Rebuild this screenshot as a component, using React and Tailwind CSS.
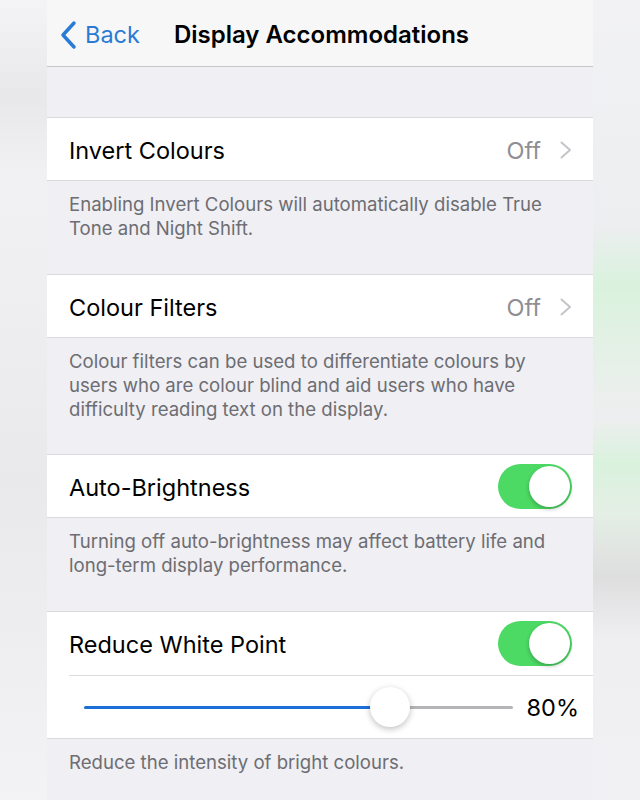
const font = { fontFamily: 'Inter, "Noto Sans", sans-serif' };

const Toggle = () => (
  <div className="relative w-[74px] h-[45px] rounded-full bg-[#4cd964]">
    <div className="absolute right-[2px] top-[2px] w-[41px] h-[41px] rounded-full bg-white shadow-[0_2px_4px_rgba(0,0,0,0.25)]" />
  </div>
);

const Footer = ({ children, className = '' }) => (
  <div className={`px-[22px] pt-[11px] text-[18.6px] leading-[24px] text-[#6d6d72] ${className}`}>
    {children}
  </div>
);

const LinkRow = ({ label, value }) => (
  <div className="h-[64px] bg-white border-y border-[#d9d9de] flex items-center pl-[22px] pr-[20px]">
    <span className="pt-[3px] text-[23.5px] text-black flex-1">{label}</span>
    <span className="pt-[3px] text-[23.5px] text-[#8e8e93]">{value}</span>
    <svg className="ml-[18px] mt-[2px]" width="14" height="18" viewBox="0 0 14 18" fill="none">
      <path d="M2.5 1.5 L11 9 L2.5 16.5" stroke="#c4c4c9" strokeWidth="2" strokeLinecap="round" strokeLinejoin="round" />
    </svg>
  </div>
);

const ToggleRow = ({ label }) => (
  <div className="h-[64px] bg-white border-y border-[#d9d9de] flex items-center pl-[22px] pr-[21px]">
    <span className="pt-[3px] text-[23.5px] text-black flex-1">{label}</span>
    <Toggle />
  </div>
);

export default function App() {
  return (
    <div className="w-[640px] h-[800px] overflow-hidden flex bg-[#f0f0f3]" style={font}>
      <div className="w-[47px] bg-[linear-gradient(180deg,#f4f4f6_0%,#e8e8eb_12%,#f1f1f3_22%,#eeeef0_40%,#e9e9ec_60%,#f3f3f5_100%)]" />

      <div className="w-[546px] bg-[#efeff4] flex flex-col">
        <div className="h-[67px] bg-[#f7f7f8] border-b border-[#c6c6cb] flex items-center pt-[3px]">
          <div className="flex items-center pl-[12px] text-[#2a7bd6]">
            <svg width="20" height="30" viewBox="0 0 20 30" fill="none">
              <path d="M15 3 L4 15 L15 27" stroke="currentColor" strokeWidth="3.5" strokeLinecap="round" strokeLinejoin="round" />
            </svg>
            <span className="ml-[6px] text-[23.5px]">Back</span>
          </div>
          <span className="ml-[34px] text-[24px] font-semibold text-black">Display Accommodations</span>
        </div>

        <div className="h-[50px]" />

        <LinkRow label="Invert Colours" value="Off" />
        <Footer className="h-[93px]">
          Enabling Invert Colours will automatically disable True Tone and Night Shift.
        </Footer>

        <LinkRow label="Colour Filters" value="Off" />
        <Footer className="h-[116px]">
          Colour filters can be used to differentiate colours by users who are colour blind and aid users who have difficulty reading text on the display.
        </Footer>

        <ToggleRow label="Auto-Brightness" />
        <Footer className="h-[93px]">
          Turning off auto-brightness may affect battery life and long-term display performance.
        </Footer>

        <div className="bg-white border-y border-[#d9d9de]">
          <div className="h-[63px] flex items-center pl-[22px] pr-[21px]">
            <span className="pt-[3px] text-[23.5px] text-black flex-1">Reduce White Point</span>
            <Toggle />
          </div>
          <div className="ml-[22px] border-t border-[#dcdcdf] h-[63px] flex items-center pr-[14px]">
            <div className="ml-[15px] w-[429px] flex items-center">
              <div className="h-[3px] w-[306px] bg-[#1d6fd8] rounded-l-full" />
              <div className="w-[40px] h-[40px] -mx-[20px] relative rounded-full bg-white shadow-[0_2px_6px_rgba(0,0,0,0.25)]" />
              <div className="h-[3px] flex-1 bg-[#b5b5b8] rounded-r-full" />
            </div>
            <span className="ml-auto pt-[2px] text-[23.5px] text-black">80%</span>
          </div>
        </div>
        <Footer>Reduce the intensity of bright colours.</Footer>
      </div>

      <div className="w-[47px] bg-[linear-gradient(180deg,#f2f2f4_0%,#eceef0_28%,#d9f2dd_36%,#e2f1e4_42%,#eeeef0_52%,#d9f2dd_58%,#e4efe5_64%,#dededf_72%,#efeff1_80%,#f1f1f3_100%)]" />
    </div>
  );
}
